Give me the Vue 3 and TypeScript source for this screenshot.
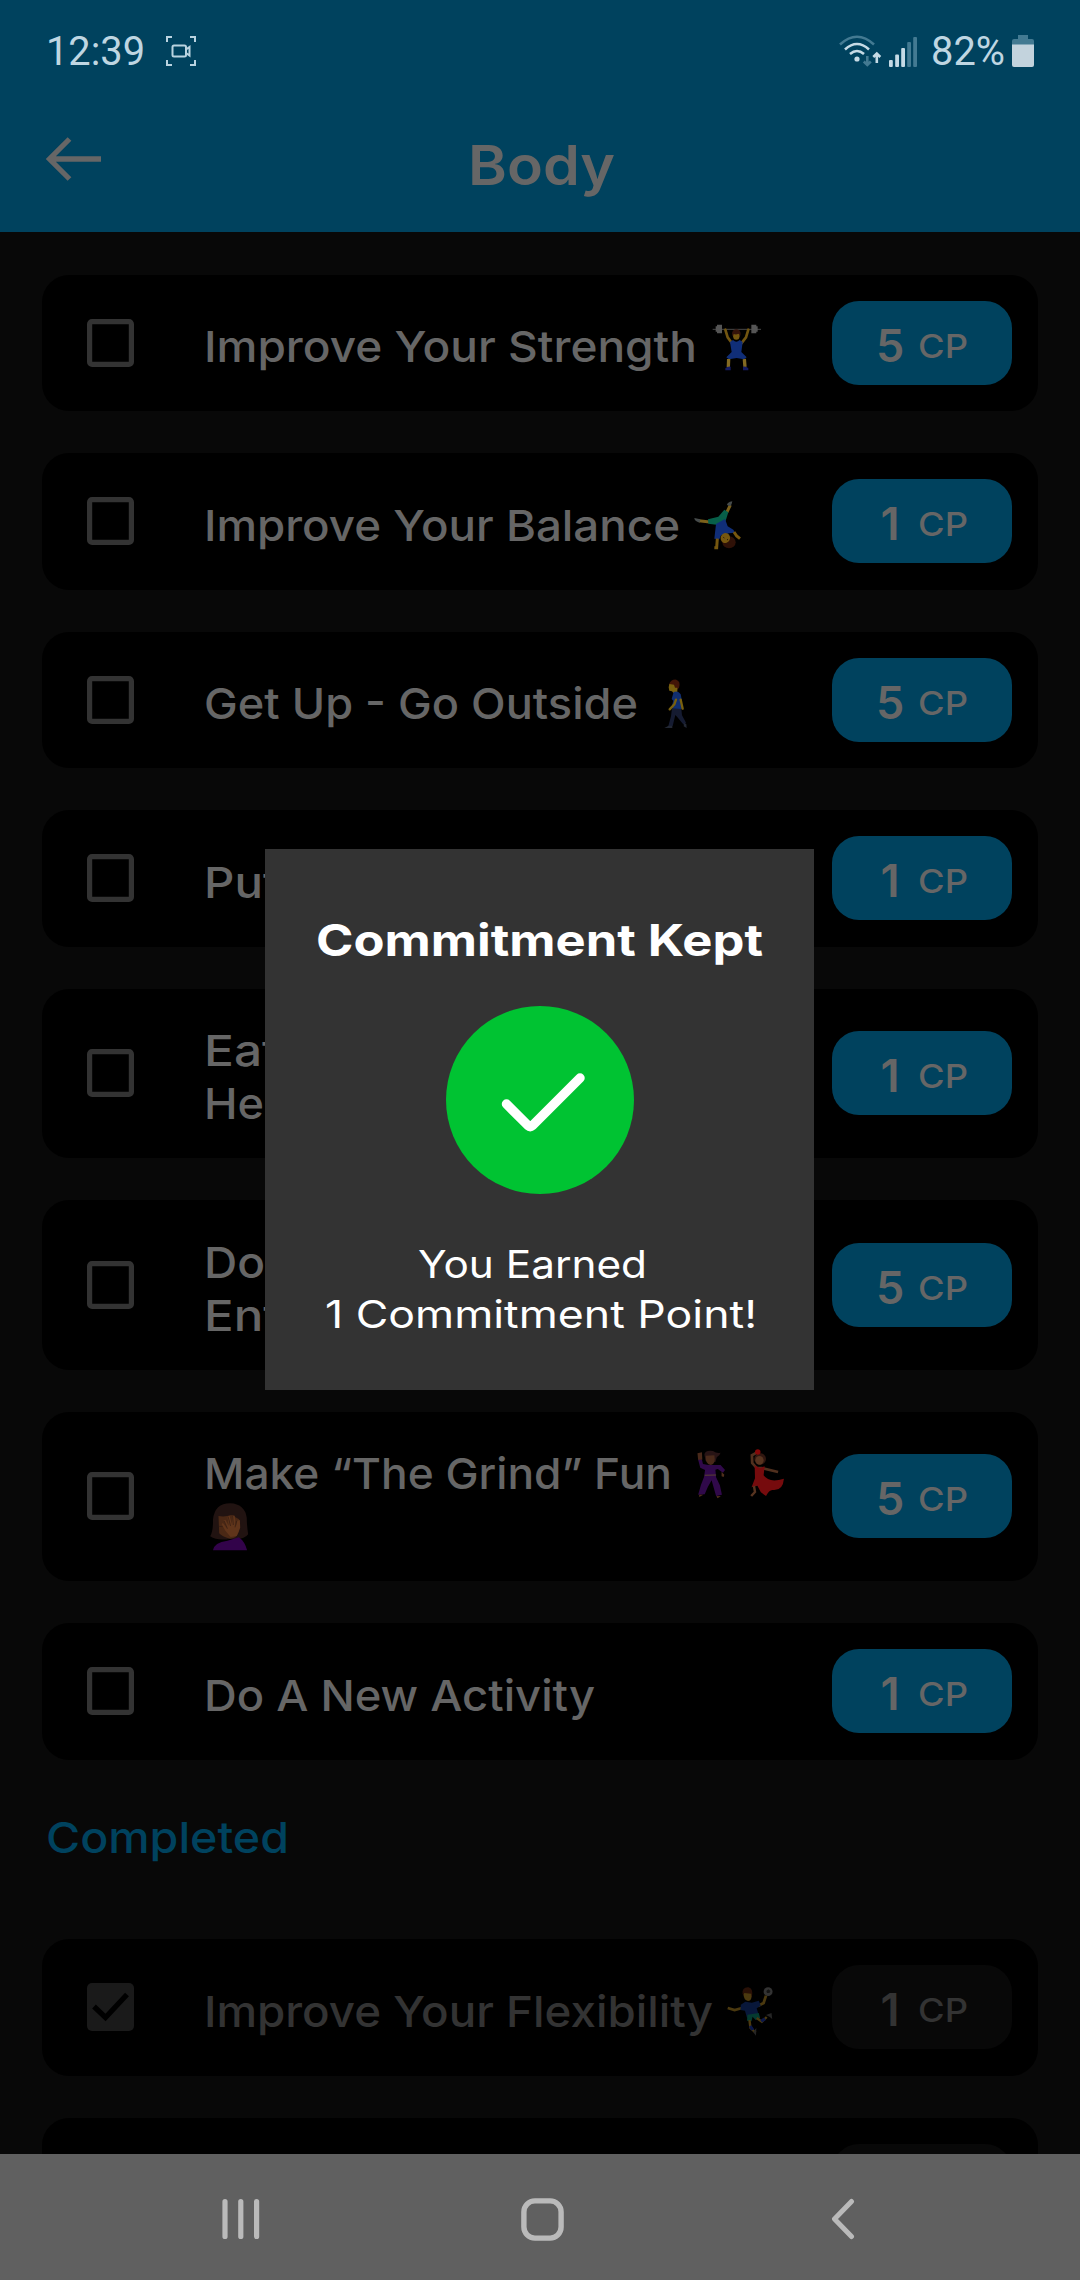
<script setup lang="ts">
interface Figure {
  box: string
  width: number
  gap: number
  label: string
  art: string
}
interface Line {
  text: string
  width?: number
  figure?: Figure
}
interface Task {
  lines: Line[]
  points: number
}

const lifter: Figure = {
  box: '218 216 150 150',
  width: 50,
  gap: 17,
  label: 'weight lifter',
  art: `<path d="M220 238H365" stroke="#484848" stroke-width="3"/>
    <path d="M229 229h4v-5h15v26h-15v-5h-4zM355 229h-4v-5h-15v26h15v-5h4z" fill="#555"/>
    <path d="M258 239L265 262L278 280M327 239L320 262L306 280" fill="none" stroke="#725510" stroke-width="8" stroke-linecap="round"/>
    <circle cx="291" cy="251" r="13" fill="#35130a"/><ellipse cx="291" cy="259" rx="9.500" ry="10.500" fill="#76570f"/>
    <path d="M281 251q10 5 20-1v-5h-20z" fill="#35130a"/>
    <path d="M272 276L281 270Q291 280 301 270L310 276L306 306L322 322L314 328L292 324L269 328L261 322L277 306Z" fill="#102e78"/>
    <path d="M268 327L267 351M315 327L317 351" stroke="#836a22" stroke-width="10"/>
    <path d="M258 361v-6q5-6 16-5v11zM327 361v-6q-5-6-16-5v11z" fill="#141b62"/>`,
}
const cartwheel: Figure = {
  box: '162 750 150 150',
  width: 50,
  gap: 15,
  label: 'cartwheel',
  art: `<path d="M274 765L263 788M180 812L212 816" stroke="#7c611b" stroke-width="9"/>
    <path d="M264 765q0-8 16-11q-1 8-6 15zM184 808l-18-4q0 10 16 14z" fill="#464b4b"/>
    <path d="M207 808L238 800L256 779L268 787L260 812L238 825L208 821Z" fill="#075f49"/>
    <path d="M231 822L258 807L266 829L283 839L288 848L270 850L246 856L241 868L226 866Z" fill="#102e78"/>
    <path d="M235 866L233 893H226M285 846L293 858L303 866" fill="none" stroke="#76570f" stroke-width="9"/>
    <ellipse cx="270" cy="877" rx="20" ry="18" fill="#2f1107"/>
    <ellipse cx="259" cy="864" rx="14" ry="15" transform="rotate(28 259 864)" fill="#76570f"/>
    <path d="M253 862l3 2m8 4l3 2" stroke="#21150a" stroke-width="3"/>`,
}
const walker: Figure = {
  box: '160 178 150 150',
  width: 50,
  gap: 15,
  label: 'walking',
  art: `<path d="M211 194Q217 178 233 180Q247 185 241 204L233 213L225 204Z" fill="#421507"/>
    <path d="M212 193L226 195L229 204L236 204V219L225 221L220 215L212 213L210 203Z" fill="#79600e"/>
    <path d="M225 217Q239 212 246 224L250 244L249 268Q233 277 218 265L224 243L219 238Z" fill="#102e70"/>
    <path d="M232 240L227 254L213 269M246 240L252 267" fill="none" stroke="#79600e" stroke-width="7" stroke-linecap="round"/>
    <path d="M220 266L248 268L250 287L262 309L255 315L235 291L230 286L222 319H209L217 290Z" fill="#151b31"/>
    <path d="M210 318L197 325H221V318ZM257 309L263 314L264 325L255 320Z" fill="#222733"/>`,
}
const dancers: Figure = {
  box: '440 145 270 150',
  width: 93,
  gap: 20.5,
  label: 'dancers',
  art: `<path d="M473 162Q474 148 498 151Q509 159 520 156Q518 165 509 170L505 184L477 181Z" fill="#281415"/>
    <path d="M477 165L502 164Q507 190 492 193Q475 191 477 165M453 158L466 155L467 177L455 179Z" fill="#49291a"/>
    <path d="M455 177H466L469 190L485 193H520L533 208L527 216L512 205L505 207L507 230L518 254L524 282L507 286L494 239L483 259L474 281L455 282L463 253L472 229L475 208L461 201Z" fill="#30094a"/>
    <path d="M474 224L507 223" stroke="#594330" stroke-width="3"/>
    <path d="M458 282h12l-12 7zM508 286l13 1-10 6zM523 214l8 8-2 7-6-2z" fill="#50301c"/>
    <path d="M626 155L611 164L612 187L625 202L640 202L687 214" fill="none" stroke="#51301e" stroke-width="8"/>
    <circle cx="635" cy="175" r="17" fill="#311710"/><ellipse cx="633" cy="179" rx="12" ry="13" fill="#573420"/>
    <circle cx="628" cy="154" r="8" fill="#850809"/>
    <path d="M619 194L634 202L648 197L645 224Q661 248 704 234Q701 270 673 268Q662 265 652 286L637 275L627 255L610 260L620 233Z" fill="#760b0d"/>
    <path d="M617 256L620 274L609 286" fill="none" stroke="#573420" stroke-width="7"/>`,
}
const facepalm: Figure = {
  box: '595 308 145 150',
  width: 50,
  gap: 0,
  label: 'face palm',
  art: `<path d="M613 411Q622 394 621 361Q626 312 671 312Q713 314 719 355Q719 375 723 405Q710 424 673 418Q635 426 613 411Z" fill="#211311"/>
    <path d="M637 350Q655 354 674 347L697 360V395Q690 417 672 418Q649 414 639 402Z" fill="#4a2815"/>
    <path d="M621 453Q624 429 663 424L696 414Q713 426 720 453Z" fill="#32034a"/>
    <path d="M646 374L657 394L672 413L690 410L700 385L699 362L692 364L688 380L684 349L677 348L676 375L669 349L663 352L667 380L657 361L651 363L662 388L650 371Z" fill="#60351b"/>
    <path d="M638 381l11 1M653 364l10 24M665 352l7 28M678 349l2 28M689 365l-4 19" stroke="#301b12" stroke-width="2"/>`,
}
const handball: Figure = {
  box: '543 618 145 150',
  width: 50,
  gap: 15,
  label: 'handball',
  art: `<path d="M591 642Q589 621 608 622Q623 625 618 651Q604 661 591 642Z" fill="#291006"/>
    <path d="M596 639L616 641Q620 662 607 663Q595 661 594 645Z" fill="#4b390f"/>
    <circle cx="665" cy="635" r="13" fill="#333"/><path d="M660 633l6-5 6 5-3 6h-7z" fill="#151515"/>
    <path d="M548 684L568 690L590 684M636 678L652 669L659 647" fill="none" stroke="#4b390f" stroke-width="8"/>
    <path d="M586 674L599 665L618 668L638 662L644 677L632 685L637 702L604 714L598 692L585 690Z" fill="#08173a"/>
    <path d="M605 704L638 699L642 714L629 720L620 710L617 724L604 722Z" fill="#043a30"/>
    <path d="M611 720L614 744L629 758M632 714L647 725L661 711" fill="none" stroke="#4b390f" stroke-width="7"/>
    <path d="M613 738L621 750M645 724L656 716" stroke="#0b1749" stroke-width="9"/>
    <path d="M624 752l7-8-1 23-8-11zM659 705l16-6 2 18-8-7z" fill="#252525"/>`,
}

const open: Task[] = [
  { lines: [{ text: 'Improve Your Strength', width: 493, figure: { ...lifter, gap: 15 } }], points: 5 },
  { lines: [{ text: 'Improve Your Balance', width: 476, figure: { ...cartwheel, gap: 13 } }], points: 1 },
  { lines: [{ text: 'Get Up - Go Outside', width: 434, figure: { ...walker, gap: 14 } }], points: 5 },
  { lines: [{ text: 'Put', width: 75 }], points: 1 },
  { lines: [{ text: 'Eat', width: 75 }, { text: 'He', width: 60 }], points: 1 },
  { lines: [{ text: 'Do', width: 61 }, { text: 'Ent', width: 76 }], points: 5 },
  { lines: [{ text: 'Make “The Grind” Fun', width: 468, figure: dancers }, { text: '', figure: facepalm }], points: 5 },
  { lines: [{ text: 'Do A New Activity', width: 391 }], points: 1 },
]

const completed: Task[] = [
  { lines: [{ text: 'Improve Your Flexibility', width: 509, figure: { ...handball, gap: 13 } }], points: 1 },
]

// Widens a line of text so that it fills the given width.
const vFit = {
  mounted(el: HTMLElement, { value }: { value?: number }) {
    if (!value) return
    const natural = el.getBoundingClientRect().width
    el.style.transform = `scaleX(${value / natural})`
    el.style.marginRight = `${value - natural}px`
  },
}
</script>

<template>
  <div class="screen">
    <header class="top">
      <div class="status">
        <span v-fit="99" class="clock">12:39</span>
        <svg class="rec" width="30" height="30" viewBox="0 0 30 30" fill="none" stroke="#b9d3e0" stroke-width="2">
          <path d="M1 6V1H6M24 1H29V6M29 24V29H24M6 29H1V24" />
          <rect x="6.500" y="9.500" width="13.500" height="11" rx="1.500" />
          <path d="M20 13.500L23.500 11V19.500L20 17" />
        </svg>
        <span class="spacer"></span>
        <svg width="44" height="34" viewBox="0 0 44 34" fill="none" stroke-width="2.600">
          <path d="M1 10.500Q18 -5 35 10.500" stroke="#437a92" />
          <path d="M6 15.500Q18 4.500 30 15.500M11 20Q18 14 25 20" stroke="#c5dae5" />
          <circle cx="18" cy="25" r="2.600" fill="#c5dae5" />
          <path d="M28.300 22V31M24.800 27.500L28.300 31L31.800 27.500" stroke="#437a92" />
          <path d="M37.800 29V19.500M34.300 23L37.800 19.500L41.300 23" stroke="#c5dae5" />
        </svg>
        <svg class="signal" width="28" height="31" viewBox="0 0 28 31">
          <g fill="#c5dae5">
            <rect x="0" y="24" width="3.800" height="7" rx="1" />
            <rect x="6.200" y="18.500" width="3.800" height="12.500" rx="1" />
            <rect x="12.200" y="12" width="3.800" height="19" rx="1" />
          </g>
          <g fill="#437a92">
            <rect x="18.200" y="6" width="3.800" height="25" rx="1" />
            <rect x="24.200" y="1" width="3.800" height="30" rx="1" />
          </g>
        </svg>
        <span v-fit="74" class="percent">82%</span>
        <svg class="battery" width="22" height="32" viewBox="0 0 22 32">
          <path d="M6 0H16V4H20Q22 4 22 6V10H0V6Q0 4 2 4H6Z" fill="#437a92" />
          <path d="M0 9.500H22V30Q22 32 20 32H2Q0 32 0 30Z" fill="#c3d3dd" />
        </svg>
      </div>
      <div class="bar">
        <svg class="back" width="56" height="44" viewBox="0 0 56 44" fill="none" stroke="#666" stroke-width="5.300">
          <path d="M55 22H4M23.500 2L3.500 22L23.500 42" />
        </svg>
        <h1><span v-fit="147">Body</span></h1>
      </div>
    </header>

    <main class="list">
      <article v-for="(task, i) in open" :key="i" class="card" :class="{ tall: task.lines.length > 1 }">
        <svg class="box" width="47" height="48" viewBox="0 0 47 48" fill="none">
          <rect x="2.600" y="2.600" width="41.800" height="42.800" rx="2.500" stroke="#333" stroke-width="5.200" />
        </svg>
        <div class="label">
          <div v-for="(line, n) in task.lines" :key="n" class="line">
            <span v-if="line.text" v-fit="line.width">{{ line.text }}</span>
            <svg
              v-if="line.figure"
              class="figure"
              :style="{ marginLeft: `${line.figure.gap}px` }"
              :width="line.figure.width"
              height="50"
              :viewBox="line.figure.box"
              :aria-label="line.figure.label"
              preserveAspectRatio="none"
              v-html="line.figure.art"
            ></svg>
          </div>
        </div>
        <div class="pill">
          <b>{{ task.points }}</b>
          <span v-fit="50">CP</span>
        </div>
      </article>

      <h2><span v-fit="243">Completed</span></h2>

      <article v-for="(task, i) in completed" :key="i" class="card done">
        <svg class="box" width="47" height="48" viewBox="0 0 47 48">
          <rect width="47" height="48" rx="5" fill="#1a1a1a" />
          <path d="M7 23.500L18.500 34.500L40 11.500" fill="none" stroke="#000" stroke-width="5.300" />
        </svg>
        <div class="label">
          <div v-for="(line, n) in task.lines" :key="n" class="line">
            <span v-fit="line.width">{{ line.text }}</span>
            <svg
              v-if="line.figure"
              class="figure"
              :style="{ marginLeft: `${line.figure.gap}px` }"
              :width="line.figure.width"
              height="50"
              :viewBox="line.figure.box"
              :aria-label="line.figure.label"
              preserveAspectRatio="none"
              v-html="line.figure.art"
            ></svg>
          </div>
        </div>
        <div class="pill">
          <b>{{ task.points }}</b>
          <span v-fit="50">CP</span>
        </div>
      </article>
      <article class="card done next">
        <div class="pill"></div>
      </article>
    </main>

    <nav class="nav">
      <svg width="38" height="42" viewBox="0 0 38 42" stroke="#bababa" stroke-width="5.200" stroke-linecap="round">
        <path d="M3 3.600V38.400M18.800 3.600V38.400M34.600 3.600V38.400" />
      </svg>
      <svg class="home" width="43" height="43" viewBox="0 0 43 43" fill="none">
        <rect x="2.900" y="2.900" width="37.200" height="37.200" rx="11" stroke="#bababa" stroke-width="5.400" />
      </svg>
      <svg width="24" height="42" viewBox="0 0 24 42" fill="none" stroke="#bababa" stroke-width="5" stroke-linecap="round" stroke-linejoin="round">
        <path d="M20.500 3.500L3.500 21L20.500 38.500" />
      </svg>
    </nav>

    <section class="modal">
      <h3><span v-fit="447">Commitment Kept</span></h3>
      <svg width="188" height="188" viewBox="0 0 188 188">
        <circle cx="94" cy="94" r="94" fill="#00c332" />
        <path d="M60.500 98L82 119.500Q84.200 121.500 86.500 119.500L134 72" fill="none" stroke="#fff" stroke-width="9.500" stroke-linecap="round" stroke-linejoin="round" />
      </svg>
      <p class="earned"><span v-fit="229">You Earned</span></p>
      <p class="points"><span v-fit="432">1 Commitment Point!</span></p>
    </section>
  </div>
</template>

<style>
body {
  background: #080808;
}
</style>

<style scoped>
.screen {
  position: relative;
  display: flex;
  flex-direction: column;
  width: 1080px;
  height: 2280px;
  overflow: hidden;
  background: #080808;
  color: #666;
  font-family: Inter, "Liberation Sans", sans-serif;
  white-space: nowrap;
}
h1, h2, h3, p {
  margin: 0;
}
span {
  display: inline-block;
  transform-origin: left;
}
svg {
  flex: none;
}
.top {
  flex: none;
  height: 232px;
  background: #00425e;
}
.status {
  display: flex;
  align-items: center;
  height: 102px;
  padding: 0 46px 0 46px;
  color: #bfd6e2;
  font: 40px/102px Roboto, sans-serif;
}
.clock,
.percent {
  padding-top: 1px;
}
.rec {
  margin-left: 21px;
}
.spacer {
  flex: 1;
}
.signal {
  margin-left: 6px;
}
.percent {
  margin-left: 14px;
}
.battery {
  margin: 0 0 0 7px;
}
.bar {
  display: flex;
  align-items: center;
  height: 130px;
  padding-left: 46px;
}
.back {
  margin-bottom: 16px;
}
h1 {
  margin: 0 0 5px 366px;
  font-size: 55px;
  font-weight: 600;
  line-height: 124px;
}
.list {
  display: flex;
  flex: 1;
  flex-direction: column;
  gap: 42px;
  min-height: 0;
  padding: 42.5px 42px 0;
  overflow: hidden;
}
.card {
  display: flex;
  flex: none;
  align-items: center;
  box-sizing: border-box;
  height: 136.5px;
  padding: 0 26px 0 44.5px;
  border-radius: 27px;
  background: #000;
}
.tall {
  height: 169.5px;
}
.next {
  justify-content: flex-end;
}
.box {
  flex: none;
}
.label {
  flex: 1;
  min-width: 0;
  margin-left: 70.5px;
  padding-top: 8px;
  font-size: 43px;
  font-weight: 500;
  line-height: 53px;
}
.line {
  display: flex;
  height: 53px;
}
.figure {
  margin-top: 1.5px;
}
.pill {
  display: flex;
  flex: none;
  box-sizing: border-box;
  width: 180px;
  height: 84px;
  padding-left: 44px;
  border-radius: 27px;
  background: #00425e;
}
.pill b {
  width: 28px;
  font-size: 45px;
  font-weight: 600;
  line-height: 90px;
  text-align: center;
}
.pill span {
  margin-left: 13.5px;
  font-size: 33px;
  font-weight: 500;
  line-height: 90px;
}
h2 {
  flex: none;
  height: 95.5px;
  padding-left: 4px;
  color: #00425e;
  font-size: 43px;
  font-weight: 500;
  line-height: 70px;
}
.done {
  color: #333;
}
.done .pill {
  background: #080808;
}
.nav {
  display: flex;
  flex: none;
  align-items: center;
  box-sizing: border-box;
  height: 126px;
  padding: 4px 0 0 221.5px;
  background: #606060;
}
.home {
  margin: 0 267.500px 0 261px;
}
.modal {
  position: absolute;
  top: 849px;
  left: 265px;
  display: flex;
  flex-direction: column;
  align-items: center;
  box-sizing: border-box;
  width: 549px;
  height: 541px;
  padding-top: 60px;
  background: #333;
  color: #fff;
}
h3 {
  height: 97px;
  font-size: 44.500px;
  font-weight: 700;
  line-height: 62px;
}
p {
  font-size: 38.500px;
  line-height: 50px;
}
.earned {
  margin: 45px 14px 0 0;
}
.points {
  margin-left: 3px;
}
</style>
